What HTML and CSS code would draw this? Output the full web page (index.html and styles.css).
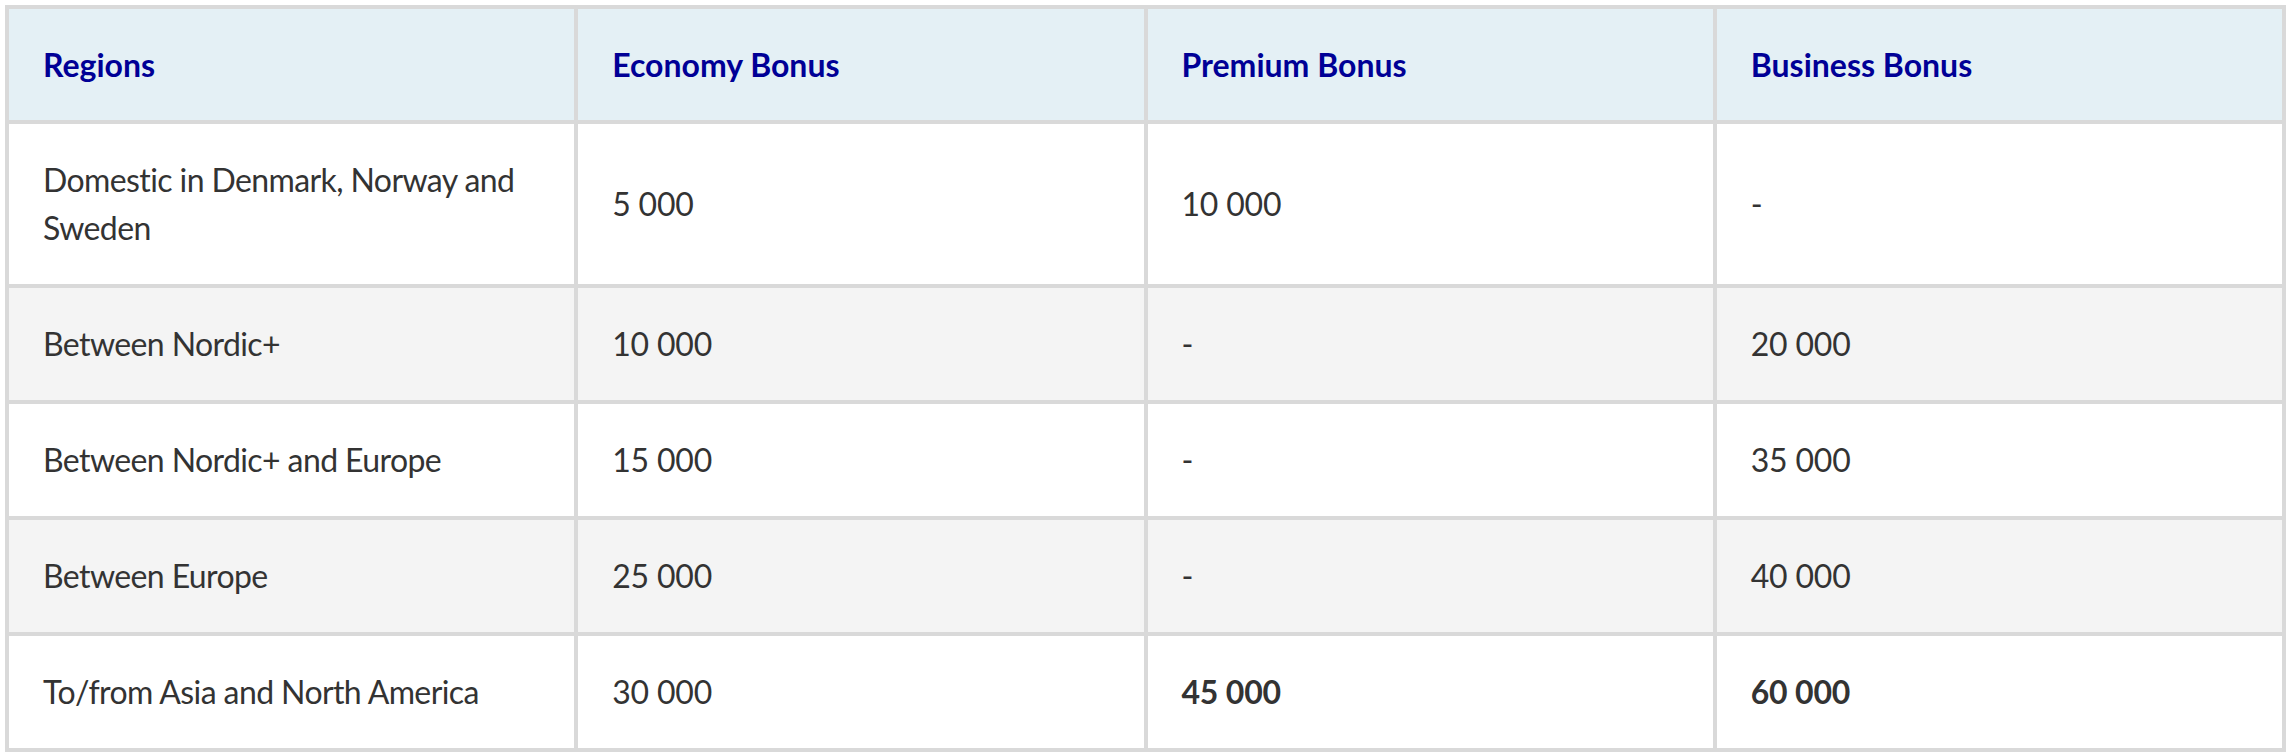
FILE: index.html
```html
<!DOCTYPE html>
<html lang="en">
<head>
<meta charset="utf-8">
<title>Bonus points by region</title>
<link rel="stylesheet" href="styles.css">
</head>
<body>
<table class="bonus-table">
  <thead>
    <tr>
      <th>Regions</th>
      <th>Economy Bonus</th>
      <th>Premium Bonus</th>
      <th>Business Bonus</th>
    </tr>
  </thead>
  <tbody>
    <tr>
      <td>Domestic in Denmark, Norway and Sweden</td>
      <td class="num">5&nbsp;000</td>
      <td class="num">10&nbsp;000</td>
      <td>-</td>
    </tr>
    <tr>
      <td>Between Nordic+</td>
      <td class="num">10&nbsp;000</td>
      <td>-</td>
      <td class="num">20&nbsp;000</td>
    </tr>
    <tr>
      <td>Between Nordic+ and Europe</td>
      <td class="num">15&nbsp;000</td>
      <td>-</td>
      <td class="num">35&nbsp;000</td>
    </tr>
    <tr>
      <td>Between Europe</td>
      <td class="num">25&nbsp;000</td>
      <td>-</td>
      <td class="num">40&nbsp;000</td>
    </tr>
    <tr>
      <td>To/from Asia and North America</td>
      <td class="num">30&nbsp;000</td>
      <td class="num"><strong class="strong-value">45&nbsp;000</strong></td>
      <td class="num"><strong class="strong-value">60&nbsp;000</strong></td>
    </tr>
  </tbody>
</table>
</body>
</html>
```
FILE: styles.css
```css
html, body {
  margin: 0;
  padding: 0;
  background: #ffffff;
}

body {
  padding: 5px 2px 0 5px;
  font-family: "Lato", "Open Sans", "Liberation Sans", sans-serif;
}

.bonus-table {
  width: 2281px;
  table-layout: fixed;
  border-collapse: separate;
  border-spacing: 0;
  border-top: 4px solid #d9d9d9;
  border-left: 4px solid #d9d9d9;
}

.bonus-table th,
.bonus-table td {
  border-right: 4px solid #d9d9d9;
  border-bottom: 4px solid #d9d9d9;
  text-align: left;
  vertical-align: middle;
  padding: 32px 34px;
  line-height: 48px;
}

.bonus-table th {
  background: #e4f0f5;
  color: #000096;
  font-weight: 700;
  font-size: 32px;
  padding-top: 32px;
  padding-bottom: 31px;
  letter-spacing: 0;
}

.bonus-table td {
  color: #333333;
  font-size: 32px;
  font-weight: 400;
  letter-spacing: -0.6px;
}

.bonus-table td.num {
  letter-spacing: -0.2px;
}

.bonus-table tbody tr:nth-child(even) td {
  background: #f4f4f4;
}

.strong-value {
  font-weight: 700;
}
```
